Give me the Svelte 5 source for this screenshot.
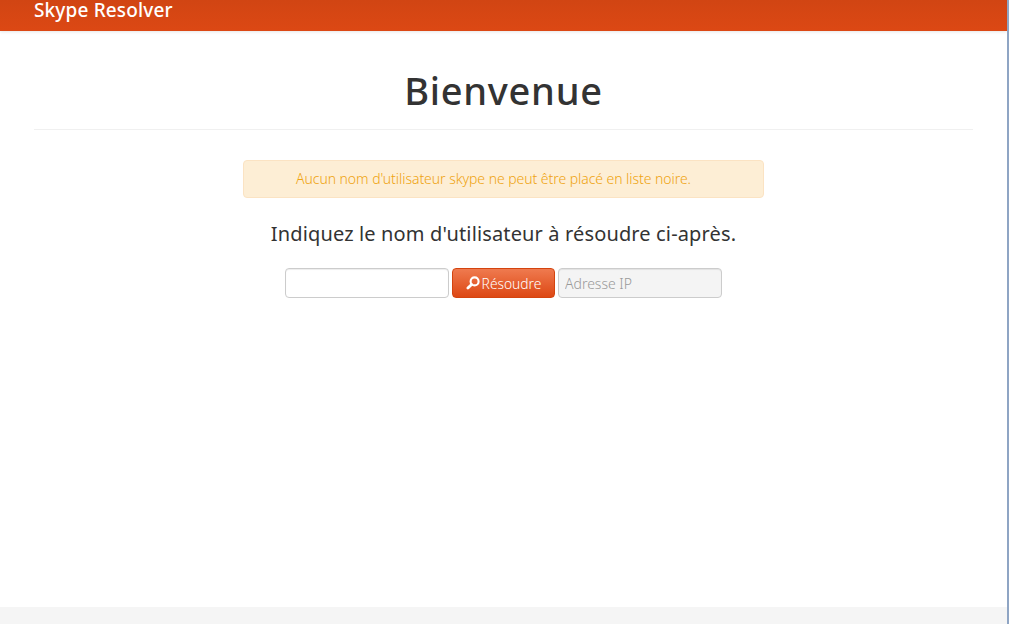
<script>
  let username = $state('');
</script>

<div class="screen">
  <div class="page">
    <header class="navbar">
      <a class="brand" href="#top">Skype Resolver</a>
    </header>

    <main class="container">
      <div class="page-header">
        <h1>Bienvenue</h1>
      </div>

      <div class="alert">Aucun nom d'utilisateur skype ne peut être placé en liste noire.</div>

      <h3>Indiquez le nom d'utilisateur à résoudre ci-après.</h3>

      <form class="resolve-form" onsubmit={(e) => e.preventDefault()}>
        <input class="field" type="text" bind:value={username} />
        <button class="btn" type="submit">
          <svg class="icon" viewBox="0 0 14 14" width="14" height="14" aria-hidden="true">
            <circle cx="8.6" cy="5.4" r="4" fill="none" stroke="#fff" stroke-width="2.1" />
            <path d="M5.6 8.4 L1.9 12.1" stroke="#fff" stroke-width="2.8" stroke-linecap="round" />
          </svg>
          <span>Résoudre</span>
        </button>
        <input class="field ip" type="text" placeholder="Adresse IP" disabled />
      </form>
    </main>

    <footer class="footer"></footer>
  </div>
  <div class="edge"></div>
</div>

<style>
  :global(body) {
    margin: 0;
    background: #fff;
  }

  .screen {
    display: flex;
    height: 624px;
    overflow: hidden;
    font-family: "Noto Sans", "Open Sans", sans-serif;
  }

  .page {
    width: 1007px;
    display: flex;
    flex-direction: column;
  }

  .edge {
    width: 2px;
    background: #8fa5c4;
  }

  .navbar {
    height: 31px;
    flex: none;
    background: linear-gradient(#d14513, #dc4814);
    box-shadow: 0 1px 3px rgba(0, 0, 0, 0.1);
    padding-left: 34px;
    box-sizing: border-box;
  }

  .brand {
    display: block;
    color: #fff;
    text-decoration: none;
    font-size: 19px;
    line-height: 20px;
    letter-spacing: 0.15px;
    font-weight: 500;
  }

  .container {
    flex: 1;
    padding: 0 34px;
    display: flex;
    flex-direction: column;
    align-items: center;
  }

  .page-header {
    align-self: stretch;
    height: 99px;
    box-sizing: border-box;
    border-bottom: 1px solid #f0f0f0;
    text-align: center;
    padding-top: 35px;
  }

  h1 {
    margin: 0;
    font-size: 38px;
    line-height: 48px;
    font-weight: 500;
    letter-spacing: 0.7px;
    color: #333;
  }

  .alert {
    margin-top: 30px;
    width: 521px;
    height: 38px;
    box-sizing: border-box;
    padding-right: 20px;
    background: #fdeed5;
    border: 1px solid #fbe3c3;
    border-radius: 4px;
    color: #efa30f;
    font-size: 14px;
    font-weight: 300;
    line-height: 36px;
    letter-spacing: -0.05px;
    text-align: center;
  }

  h3 {
    margin: 21px 0 0;
    font-size: 20px;
    line-height: 30px;
    font-weight: 400;
    letter-spacing: 0.14px;
    color: #333;
  }

  .resolve-form {
    margin-top: 19px;
    display: flex;
    gap: 3px;
  }

  .field {
    width: 164px;
    height: 30px;
    box-sizing: border-box;
    padding: 0 6px;
    background: #fff;
    border: 1px solid #ccc;
    border-radius: 4px;
    box-shadow: inset 0 1px 1px rgba(0, 0, 0, 0.075);
    font-family: inherit;
    font-size: 14px;
    font-weight: 300;
    outline: none;
  }

  .ip {
    background: #f4f4f4;
  }

  .ip::placeholder {
    color: #999;
    opacity: 1;
  }

  .btn {
    width: 103px;
    height: 30px;
    padding: 0;
    display: flex;
    align-items: center;
    justify-content: center;
    gap: 2px;
    background: linear-gradient(#ef7a4f, #dd4814);
    border: 1px solid #d4440f;
    border-radius: 4px;
    color: #fff;
    font-family: inherit;
    font-size: 13.8px;
    font-weight: 300;
  }

  .footer {
    height: 17px;
    flex: none;
    background: #f5f5f5;
  }
</style>
